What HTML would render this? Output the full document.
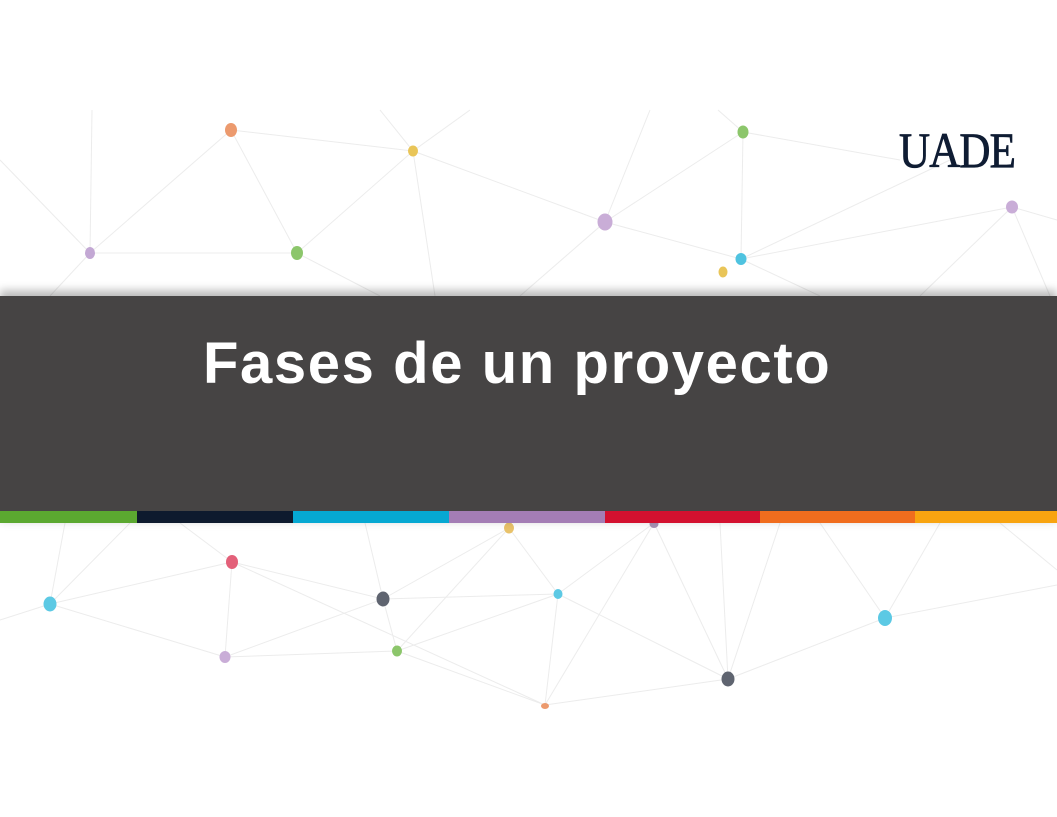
<!DOCTYPE html>
<html><head><meta charset="utf-8"><style>
body{margin:0;width:1057px;height:817px;background:#fff;overflow:hidden;position:relative;font-family:"Liberation Sans",sans-serif}
svg{position:absolute;left:0;top:0}
.band{position:absolute;left:0;top:296px;width:1057px;height:215px;background:#464444;box-shadow:0 -6px 8px rgba(0,0,0,.25),0 8px 10px rgba(0,0,0,.3)}
.stripe{position:absolute;left:0;top:511px;height:12px;width:1057px;display:flex}
.stripe div{height:12px}
.title{position:absolute;left:203px;top:330px;color:#fff;font-weight:bold;font-size:58px;white-space:nowrap;letter-spacing:1.6px}
.logo{position:absolute;left:899px;top:121px;font-family:"Liberation Serif",serif;font-size:50px;color:#0f1c33;transform:scaleX(0.86);transform-origin:left top;letter-spacing:-1px;-webkit-text-stroke:0.8px #0f1c33}
</style></head><body>
<svg width="1057" height="817">
<g stroke="#ececec" stroke-width="1" fill="none">
<line x1="231" y1="130" x2="413" y2="151"/><line x1="231" y1="130" x2="90" y2="253"/><line x1="231" y1="130" x2="297" y2="253"/>
<line x1="413" y1="151" x2="297" y2="253"/><line x1="413" y1="151" x2="605" y2="222"/><line x1="413" y1="151" x2="435" y2="296"/>
<line x1="90" y1="253" x2="297" y2="253"/><line x1="90" y1="253" x2="92" y2="110"/><line x1="0" y1="160" x2="90" y2="253"/>
<line x1="605" y1="222" x2="741" y2="259"/><line x1="605" y1="222" x2="743" y2="132"/><line x1="605" y1="222" x2="650" y2="110"/>
<line x1="743" y1="132" x2="900" y2="160"/><line x1="743" y1="132" x2="741" y2="259"/><line x1="743" y1="132" x2="718" y2="110"/>
<line x1="741" y1="259" x2="1012" y2="207"/><line x1="741" y1="259" x2="950" y2="160"/><line x1="1012" y1="207" x2="1057" y2="220"/>
<line x1="1012" y1="207" x2="920" y2="296"/><line x1="1012" y1="207" x2="1050" y2="296"/><line x1="741" y1="259" x2="820" y2="296"/>
<line x1="605" y1="222" x2="520" y2="296"/><line x1="297" y1="253" x2="380" y2="296"/><line x1="90" y1="253" x2="50" y2="296"/>
<line x1="380" y1="110" x2="413" y2="151"/><line x1="470" y1="110" x2="413" y2="151"/>
<line x1="232" y1="562" x2="50" y2="604"/><line x1="232" y1="562" x2="383" y2="599"/><line x1="232" y1="562" x2="225" y2="657"/><line x1="232" y1="562" x2="545" y2="705"/>
<line x1="232" y1="562" x2="180" y2="523"/><line x1="50" y1="604" x2="225" y2="657"/><line x1="50" y1="604" x2="0" y2="620"/><line x1="50" y1="604" x2="65" y2="523"/><line x1="50" y1="604" x2="130" y2="523"/>
<line x1="383" y1="599" x2="558" y2="594"/><line x1="383" y1="599" x2="397" y2="651"/><line x1="383" y1="599" x2="225" y2="657"/><line x1="383" y1="599" x2="365" y2="523"/><line x1="383" y1="599" x2="509" y2="528"/>
<line x1="225" y1="657" x2="397" y2="651"/><line x1="397" y1="651" x2="558" y2="594"/><line x1="397" y1="651" x2="509" y2="528"/><line x1="397" y1="651" x2="545" y2="705"/>
<line x1="558" y1="594" x2="509" y2="528"/><line x1="558" y1="594" x2="654" y2="523"/><line x1="558" y1="594" x2="728" y2="679"/><line x1="558" y1="594" x2="545" y2="705"/>
<line x1="654" y1="523" x2="728" y2="679"/><line x1="654" y1="523" x2="545" y2="705"/><line x1="728" y1="679" x2="885" y2="618"/><line x1="728" y1="679" x2="545" y2="705"/><line x1="728" y1="679" x2="780" y2="523"/><line x1="728" y1="679" x2="720" y2="523"/>
<line x1="885" y1="618" x2="1057" y2="585"/><line x1="885" y1="618" x2="820" y2="523"/><line x1="885" y1="618" x2="940" y2="523"/><line x1="1057" y1="570" x2="1000" y2="523"/>
</g>
<g>
<ellipse cx="231" cy="130" rx="6" ry="7" fill="#ec9a6e"/><ellipse cx="413" cy="151" rx="5" ry="5.5" fill="#e9c558"/>
<ellipse cx="90" cy="253" rx="5" ry="6" fill="#c3a8d4"/><ellipse cx="297" cy="253" rx="6" ry="7" fill="#8cc66b"/>
<ellipse cx="605" cy="222" rx="7.5" ry="8.5" fill="#c9add7"/><ellipse cx="743" cy="132" rx="5.5" ry="6.5" fill="#8cc66b"/>
<ellipse cx="741" cy="259" rx="5.5" ry="6" fill="#4fc3e0"/><ellipse cx="723" cy="272" rx="4.5" ry="5.5" fill="#e9c558"/>
<ellipse cx="1012" cy="207" rx="6" ry="6.5" fill="#c9add7"/>
<ellipse cx="232" cy="562" rx="6" ry="7" fill="#e36079"/><ellipse cx="50" cy="604" rx="6.5" ry="7.5" fill="#5cc9e4"/>
<ellipse cx="383" cy="599" rx="6.5" ry="7.5" fill="#5f6470"/><ellipse cx="558" cy="594" rx="4.5" ry="5" fill="#5cc9e4"/>
<ellipse cx="225" cy="657" rx="5.5" ry="6" fill="#c9add7"/><ellipse cx="397" cy="651" rx="5" ry="5.5" fill="#8cc66b"/>
<ellipse cx="728" cy="679" rx="6.5" ry="7.5" fill="#5f6470"/><ellipse cx="885" cy="618" rx="7" ry="8" fill="#5cc9e4"/>
<ellipse cx="545" cy="706" rx="4" ry="3" fill="#ec9a6e"/><ellipse cx="509" cy="528" rx="5" ry="5.5" fill="#e9c26a"/><ellipse cx="654" cy="524" rx="4.5" ry="4" fill="#a892b4"/>
</g>
</svg>
<div class="band"></div>
<div class="stripe">
<div style="width:137px;background:#5ba830"></div><div style="width:156px;background:#0e1a2e"></div><div style="width:156px;background:#06a8d2"></div><div style="width:156px;background:#a47db5"></div><div style="width:155px;background:#d3112f"></div><div style="width:155px;background:#f06d1e"></div><div style="width:142px;background:#f8a410"></div>
</div>
<div class="title">Fases de un proyecto</div>
<div class="logo">UADE</div>
</body></html>
